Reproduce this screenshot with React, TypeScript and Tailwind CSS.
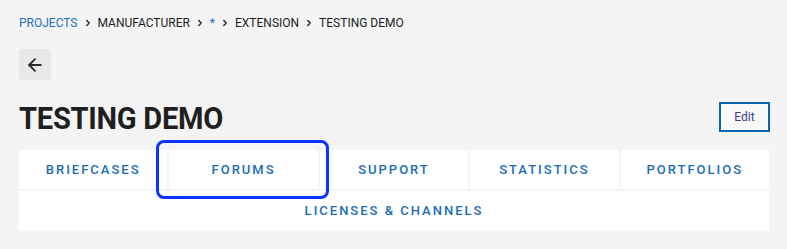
import { ArrowLeft, ChevronRight } from "lucide-react";

const crumbs = [
  { label: "PROJECTS", link: true },
  { label: "MANUFACTURER", link: false },
  { label: "*", link: true },
  { label: "EXTENSION", link: false },
  { label: "TESTING DEMO", link: false },
];

const tabs = ["BRIEFCASES", "FORUMS", "SUPPORT", "STATISTICS", "PORTFOLIOS"];

export default function App() {
  return (
    <div className="min-h-[249px] w-full bg-[#f4f4f4] px-[19px] pt-[14px] font-['Roboto',sans-serif]">
      <nav className="flex h-[18px] items-center text-[12px] leading-none">
        {crumbs.map((c, i) => (
          <div key={c.label} className="flex items-center">
            {i > 0 && (
              <ChevronRight size={10} strokeWidth={3.6} className="mx-[5px] text-[#2b2b2b]" />
            )}
            <span className={c.link ? "text-[#1f6fc0]" : "text-[#1d1d1d]"}>{c.label}</span>
          </div>
        ))}
      </nav>

      <button className="mt-[17px] flex h-[31px] w-[32px] items-center justify-center rounded-[2px] bg-[#e8e8e8] text-[#2a2a2a]">
        <ArrowLeft size={20} strokeWidth={2.2} />
      </button>

      <div className="mt-[22px] flex items-start justify-between">
        <h1 className="mt-[-1px] origin-left scale-x-[0.91] text-[32px] font-bold leading-[34px] tracking-[-0.3px] text-[#1f1f1f]">
          TESTING DEMO
        </h1>
        <button className="mr-[-2px] h-[30px] w-[51px] border-2 border-[#0a66b0] bg-[#f8f8f8] text-[12px] text-[#3a3f8a]">
          Edit
        </button>
      </div>

      <div className="relative mt-[15px] flex w-[750px] flex-col gap-[2px]">
        <div className="grid grid-cols-5 gap-[2px]">
          {tabs.map((t) => (
            <div
              key={t}
              className="flex h-[39px] items-center justify-center bg-white text-[13px] font-medium tracking-[2px] text-[#1a6db5]"
            >
              {t}
            </div>
          ))}
        </div>
        <div className="flex h-[40px] items-center justify-center bg-white text-[13px] font-medium tracking-[2px] text-[#1a6db5]">
          LICENSES &amp; CHANNELS
        </div>
        <div className="pointer-events-none absolute left-[137px] top-[-10px] h-[59px] w-[173px] rounded-[8px] border-[3px] border-[#0a34ff]" />
      </div>
    </div>
  );
}
